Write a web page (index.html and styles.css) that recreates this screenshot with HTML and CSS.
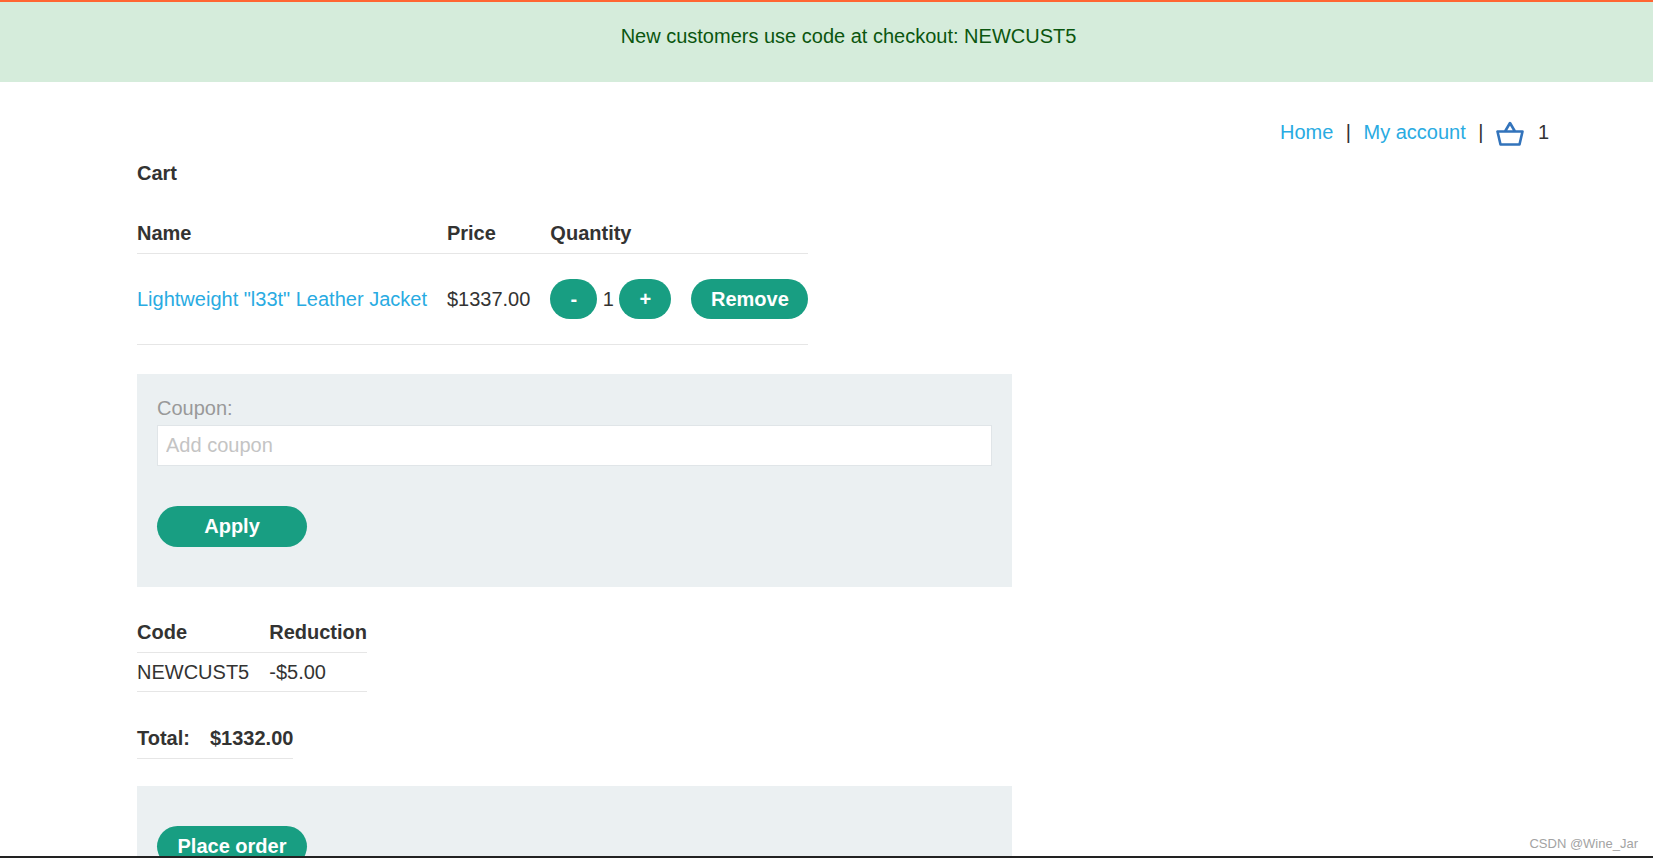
FILE: index.html
```html
<!DOCTYPE html>
<html lang="en">
<head>
    <meta charset="UTF-8">
    <meta name="viewport" content="width=device-width, initial-scale=1.0">
    <title>Cart</title>
    <link rel="stylesheet" href="styles.css">
</head>
<body>

    <div class="page">
        <div class="banner">New customers use code at checkout: NEWCUST5</div>

        <nav class="top-links">
            <a href="#">Home</a>
            <span class="sep">|</span>
            <a href="#">My account</a>
            <span class="sep">|</span>
            <svg class="basket" viewBox="0 0 28 25" width="28" height="25" aria-label="Cart">
                <path d="M1.5 10.5H26.5L23.5 23.5H4.5Z M9 10.5L14 2L19 10.5" fill="none" stroke="#3273bb" stroke-width="2.6" stroke-linejoin="round"/>
            </svg>
            <span class="count">1</span>
        </nav>

        <main class="container">
            <p class="title">Cart</p>

            <table class="cart-table">
                <thead>
                    <tr>
                        <th>Name</th>
                        <th>Price</th>
                        <th colspan="2">Quantity</th>
                    </tr>
                </thead>
                <tbody>
                    <tr>
                        <td><a href="#">Lightweight "l33t" Leather Jacket</a></td>
                        <td>$1337.00</td>
                        <td>
                            <div class="qty">
                                <button class="button qty-btn">-</button>
                                <span class="qty-num">1</span>
                                <button class="button qty-btn plus">+</button>
                            </div>
                        </td>
                        <td><button class="button remove">Remove</button></td>
                    </tr>
                </tbody>
            </table>

            <form class="panel coupon">
                <label class="coupon-label" for="coupon">Coupon:</label>
                <input type="text" id="coupon" class="input-field" placeholder="Add coupon">
                <button type="button" class="button wide">Apply</button>
            </form>

            <table class="code-table">
                <tr>
                    <th>Code</th>
                    <th>Reduction</th>
                </tr>
                <tr>
                    <td>NEWCUST5</td>
                    <td>-$5.00</td>
                </tr>
            </table>

            <table class="total-table">
                <tr>
                    <th>Total:</th>
                    <th>$1332.00</th>
                </tr>
            </table>

            <form class="panel order">
                <button type="button" class="button wide">Place order</button>
            </form>
        </main>

        <span class="watermark">CSDN @Wine_Jar</span>
    </div>

</body>
</html>
```

FILE: styles.css
```css
* {
    box-sizing: border-box;
}
body {
    margin: 0;
    padding: 0;
    height: 858px;
    overflow: hidden;
    background-color: #fff;
    font-family: "Liberation Sans", Arial, sans-serif;
    font-size: 20px;
    color: #333332;
}
a {
    color: #29abe2;
    text-decoration: none;
}
.page {
    position: relative;
    height: 858px;
    overflow: hidden;
    border-bottom: 2px solid #222;
}
.banner {
    height: 82px;
    padding-top: 20px;
    padding-left: 44px;
    line-height: 28px;
    border-top: 2px solid #ff6633;
    background: #d5ecdb;
    color: #0b560f;
    text-align: center;
}
.top-links {
    display: flex;
    align-items: center;
    height: 28px;
    margin-top: 36px;
    padding-right: 109px;
    justify-content: flex-end;
}
.sep {
    margin: 0 12.5px;
}
.basket {
    margin-top: 2px;
}
.count {
    width: 6px;
    margin-left: 14px;
    white-space: nowrap;
}
.container {
    padding-left: 137px;
}
.title {
    margin: 13px 0 0;
    line-height: 28px;
    font-weight: bold;
}
table {
    border-collapse: collapse;
}
th {
    text-align: left;
    font-weight: bold;
}
.cart-table {
    margin-top: 31px;
}
.cart-table th {
    height: 35px;
    padding: 0 20px 4px 0;
    border-bottom: 1px solid #e6e6e6;
}
.cart-table td {
    height: 91px;
    padding: 1px 20px 0 0;
    border-bottom: 1px solid #e6e6e6;
}
.cart-table tr > :last-child {
    padding-right: 0;
}
.qty {
    display: flex;
    align-items: center;
}
.qty-num {
    width: 22px;
    text-align: center;
}
.button {
    height: 40px;
    padding: 0 20px;
    background: #189e82;
    color: #fff;
    font-family: inherit;
    font-size: 20px;
    font-weight: bold;
    border: none;
    border-radius: 20px;
    cursor: pointer;
}
.qty-btn {
    width: 47px;
    padding: 0;
}
.qty-btn.plus {
    width: 52px;
}
.remove {
    width: 117px;
    padding: 0;
}
.wide {
    display: block;
    width: 150px;
    height: 41px;
    padding: 0;
    border-radius: 21px;
}
.panel {
    width: 875px;
    padding: 20px;
    background: #ebf0f2;
}
.coupon {
    height: 213px;
    margin-top: 29px;
    padding-top: 21px;
}
.coupon-label {
    display: block;
    height: 30px;
    line-height: 26px;
    color: #999;
}
.input-field {
    display: block;
    width: 100%;
    height: 41px;
    padding: 0 8px;
    margin-bottom: 40px;
    border: 1px solid #e0e5e8;
    font-family: inherit;
    font-size: 20px;
    color: #333332;
    background: #fff;
}
.input-field::placeholder {
    color: #c4c4c4;
}
.code-table {
    margin-top: 28px;
}
.code-table th {
    height: 38px;
    padding: 0 20px 1px 0;
    border-bottom: 1px solid #e6e6e6;
}
.code-table td {
    height: 39px;
    padding: 0 20px 0 0;
    border-bottom: 1px solid #e6e6e6;
}
.code-table tr > :last-child {
    padding-right: 0;
}
.total-table {
    margin-top: 27px;
}
.total-table th {
    height: 39px;
    padding: 0 20px 0 0;
    border-bottom: 1px solid #e6e6e6;
}
.total-table th:last-child {
    padding-right: 0;
}
.order {
    margin-top: 27px;
    height: 100px;
    padding-top: 40px;
}
.watermark {
    position: absolute;
    right: 15px;
    bottom: 5px;
    font-size: 13px;
    color: #a3a3a3;
}
```
